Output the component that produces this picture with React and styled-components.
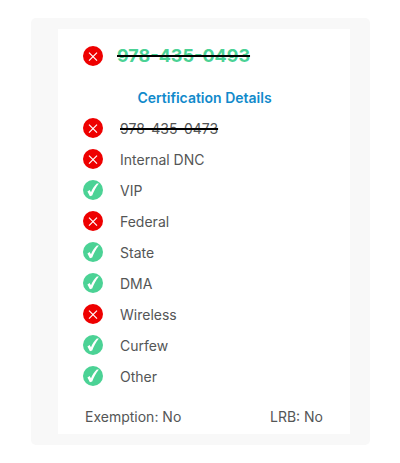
import React from "react";
import styled, { createGlobalStyle } from "styled-components";

const GlobalStyle = createGlobalStyle`
    * {
        box-sizing: border-box;
    }

    body {
        margin: 0;
        background: #ffffff;
        color: #545656;
        font-family: "Inter", "Liberation Sans", sans-serif;
        font-size: 14px;
    }
`

const Panel = styled.main`
    margin: 18px 30px 18px 31px;
    padding: 11px 20px 11px 27px;
    border-radius: 5px;
    background: #f8f8f8;
`

const Card = styled.article`
    padding: 11px 27px 1px 25px;
    background: #ffffff;
`

const StatusIcon = styled.svg`
    flex: none;
    width: 20px;
    height: 20px;
`

const PhoneHeader = styled.header`
    display: flex;
    align-items: center;
    gap: 14px;
    height: 31px;
`

const Row = styled.li`
    display: flex;
    align-items: center;
    gap: 17px;
    height: 31px;

    ${StatusIcon} {
        margin-bottom: 2px;
    }
`

const Phone = styled.h1`
    margin: 0;
    color: #4bd295;
    font-size: 18px;
    font-weight: 700;
    line-height: 24px;
`

const Struck = styled.del`
    text-decoration: line-through 2px #000000;
`

const Title = styled.h2`
    margin: 0;
    padding: 17px 0 5px 3px;
    color: #118acb;
    font-size: 14px;
    font-weight: 600;
    line-height: 20px;
    text-align: center;
`

const List = styled.ul`
    margin: 0;
    padding: 0;
    list-style: none;
`

const Label = styled.span`
    line-height: 20px;
`

const Footer = styled.footer`
    display: flex;
    justify-content: space-between;
    padding: 15px 0 6px 2px;
    line-height: 20px;
`

const checks = [
    { name: "978-435-0473", ok: false, struck: true },
    { name: "Internal DNC", ok: false },
    { name: "VIP", ok: true },
    { name: "Federal", ok: false },
    { name: "State", ok: true },
    { name: "DMA", ok: true },
    { name: "Wireless", ok: false },
    { name: "Curfew", ok: true },
    { name: "Other", ok: true },
]

function Status({ ok }) {
    return (
        <StatusIcon viewBox="0 0 20 20" role="img" aria-label={ok ? "Passed" : "Blocked"}>
            <circle cx="10" cy="10" r="10" fill={ok ? "#4bd295" : "#ee0000"} />
            {ok ? (
                <path d="M4.4 11.4 L6.6 9.9 L8 12.2 C9.4 8.8 11.2 6 13.8 3.4 L15.9 3.4 C12.9 7.2 10.9 11 9.2 15.4 L6.9 16.2 Z" fill="#ffffff" />
            ) : (
                <path d="M6 6.6 L14 14.6 M14 6.6 L6 14.6" stroke="#ffffff" strokeWidth="1.2" fill="none" />
            )}
        </StatusIcon>
    )
}

export default function App() {
    return (
        <>
            <GlobalStyle />
            <Panel>
                <Card>
                    <PhoneHeader>
                        <Status ok={false} />
                        <Phone><Struck>978-435-0493</Struck></Phone>
                    </PhoneHeader>
                    <Title>Certification Details</Title>
                    <List>
                        {checks.map(({ name, ok, struck }) => (
                            <Row key={name}>
                                <Status ok={ok} />
                                <Label>{struck ? <Struck>{name}</Struck> : name}</Label>
                            </Row>
                        ))}
                    </List>
                    <Footer>
                        <span>Exemption: No</span>
                        <span>LRB: No</span>
                    </Footer>
                </Card>
            </Panel>
        </>
    )
}
